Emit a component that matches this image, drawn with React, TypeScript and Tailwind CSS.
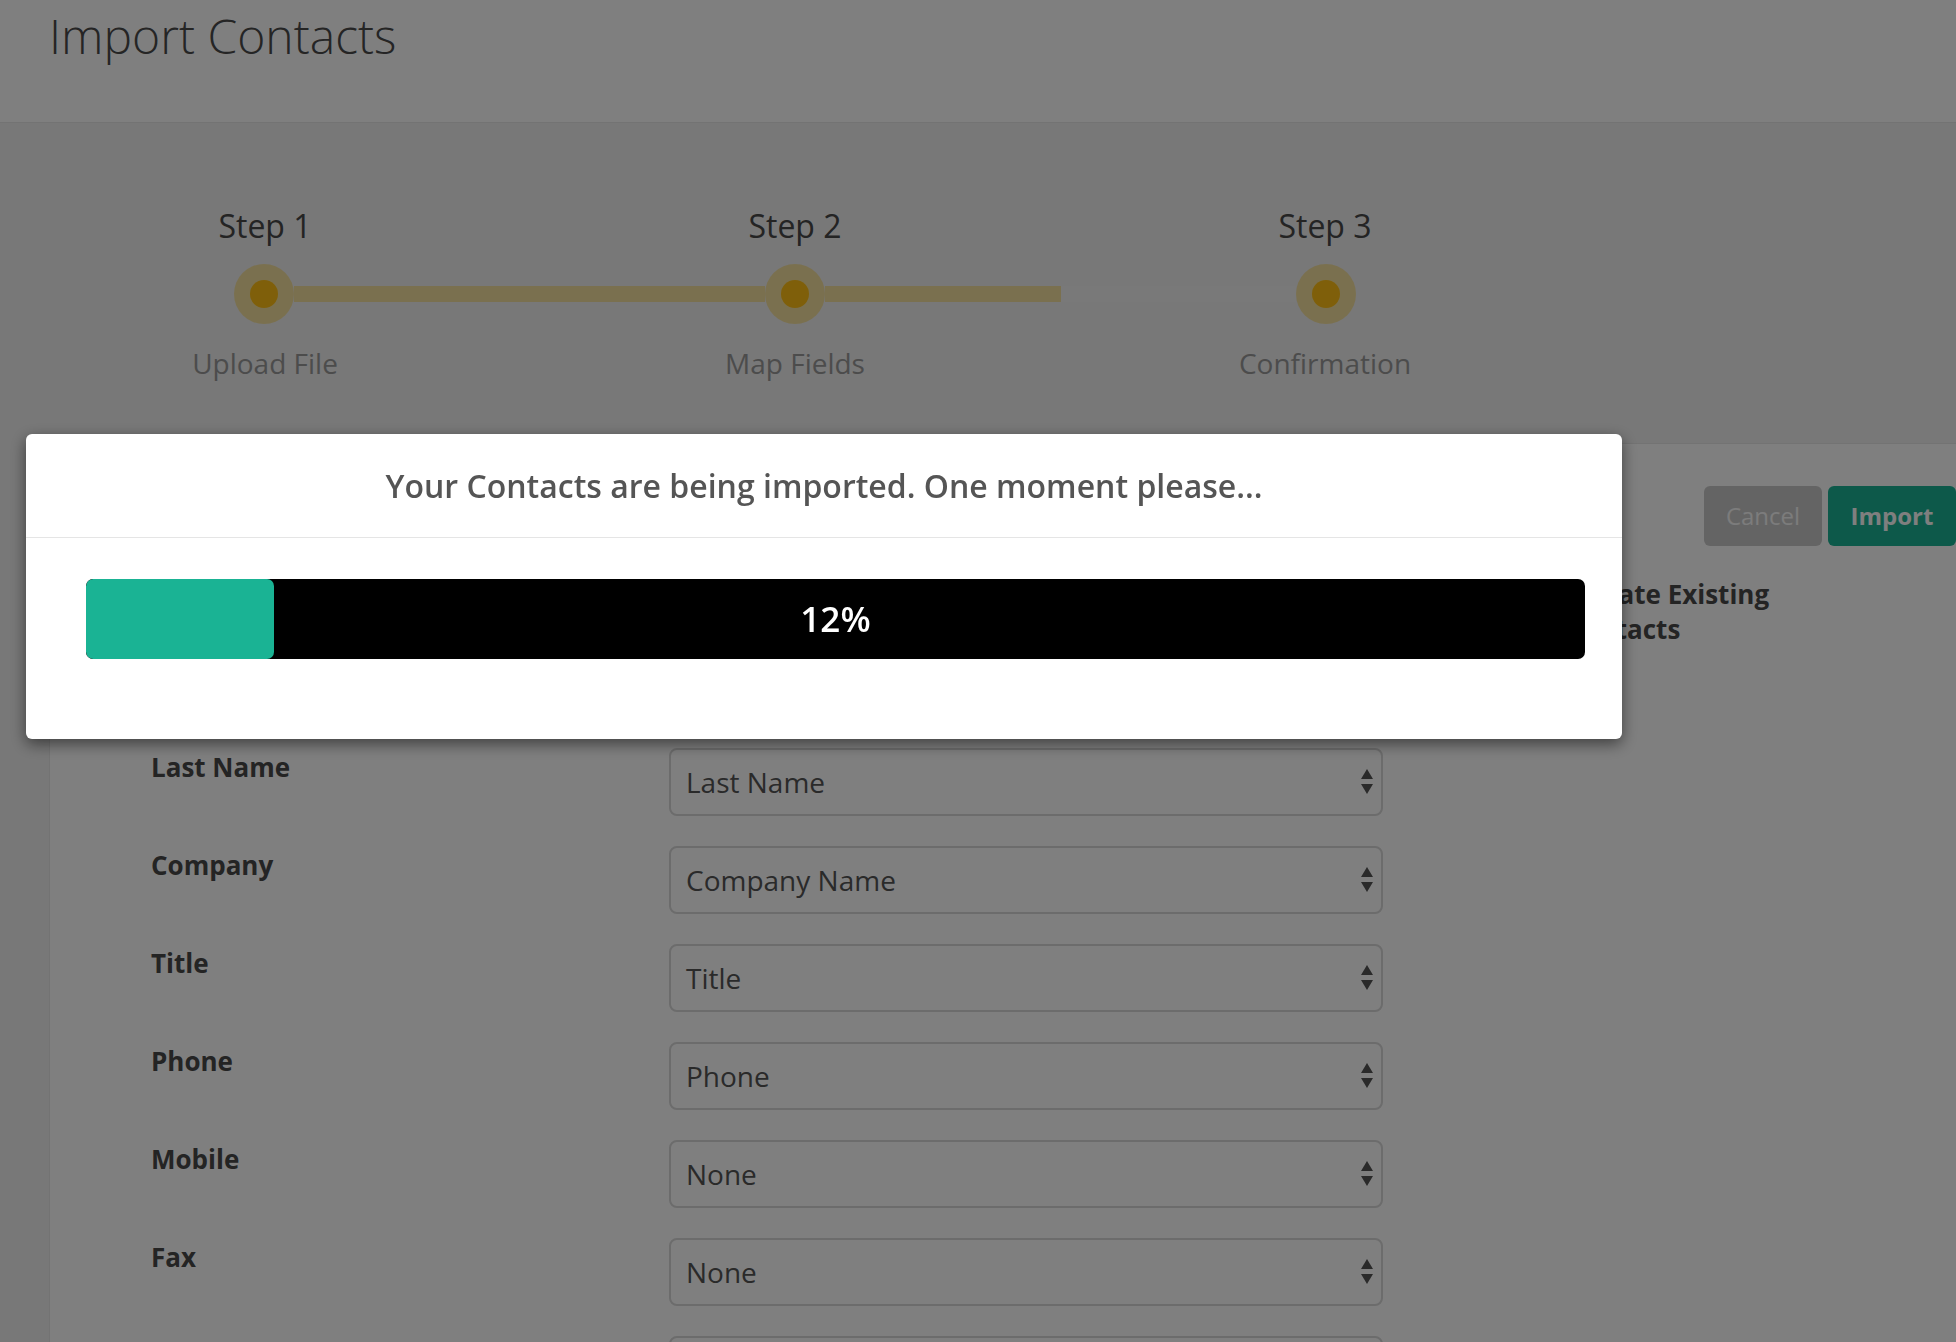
const steps = [
  { title: "Step 1", label: "Upload File" },
  { title: "Step 2", label: "Map Fields" },
  { title: "Step 3", label: "Confirmation" },
];

const fields = [
  { label: "Email", value: "Email" },
  { label: "First Name", value: "First Name" },
  { label: "Last Name", value: "Last Name" },
  { label: "Company", value: "Company Name" },
  { label: "Title", value: "Title" },
  { label: "Phone", value: "Phone" },
  { label: "Mobile", value: "None" },
  { label: "Fax", value: "None" },
  { label: "Address", value: "Address" },
];

function Dot() {
  return (
    <div className="grid h-[60px] w-[60px] shrink-0 place-items-center rounded-full bg-[#f5e19f]">
      <div className="h-[28px] w-[28px] rounded-full bg-[#ffbf14]" />
    </div>
  );
}

function SelectArrows() {
  return (
    <svg width="12" height="26" viewBox="0 0 12 26" className="shrink-0">
      <path d="M6 0 L12 10 L0 10 Z" fill="#555" />
      <path d="M0 15 L12 15 L6 25 Z" fill="#555" />
    </svg>
  );
}

function Stepper() {
  return (
    <div className="w-[1590px] pt-[83px] pb-[61px]">
      <div className="grid grid-cols-3">
        {steps.map((s) => (
          <div key={s.title} className="text-center text-[32px] leading-[40px] text-[#484848]">
            {s.title}
          </div>
        ))}
      </div>
      <div className="mt-[18px] flex items-center px-[234px]">
        <Dot />
        <div className="h-[16px] flex-1 bg-[#f5e19f]" />
        <Dot />
        <div className="flex h-[16px] flex-1">
          <div className="flex-1 bg-[#f5e19f]" />
          <div className="flex-1 bg-[#f3f3f3]" />
        </div>
        <Dot />
      </div>
      <div className="mt-[20px] grid grid-cols-3">
        {steps.map((s) => (
          <div key={s.label} className="text-center text-[28px] leading-[38px] text-[#999]">
            {s.label}
          </div>
        ))}
      </div>
    </div>
  );
}

function FieldRow({ label, value }: { label: string; value: string }) {
  return (
    <div className="flex items-start">
      <div className="w-[518px] pt-px text-[26px] font-bold leading-[36px] text-[#484848]">{label}</div>
      <div className="flex h-[68px] w-[714px] items-center justify-between rounded-[8px] border-2 border-[#d8d8d8] bg-white pl-[15px] pr-[8px] text-[28px] text-[#555]">
        <span>{value}</span>
        <SelectArrows />
      </div>
    </div>
  );
}

function ImportModal({ percent }: { percent: number }) {
  return (
    <div className="fixed inset-0 bg-black/50 pl-[26px] pt-[434px]">
      <div className="w-[1596px] rounded-[6px] bg-white shadow-[0_5px_15px_rgba(0,0,0,0.5)]">
        <div className="flex h-[104px] items-center justify-center border-b border-[#e5e5e5] text-[32px] font-semibold text-[#555]">
          Your Contacts are being imported. One moment please...
        </div>
        <div className="pb-[80px] pl-[60px] pr-[37px] pt-[41px]">
          <div className="relative h-[80px] overflow-hidden rounded-[7px] bg-black">
            <div className="h-full rounded-[7px] bg-[#1ab394]" style={{ width: `calc(${percent}% + 8px)` }} />
            <div className="absolute inset-0 flex items-center justify-center text-[35px] font-semibold text-white">
              {percent}%
            </div>
          </div>
        </div>
      </div>
    </div>
  );
}

export default function App() {
  return (
    <div className="h-screen overflow-hidden bg-[#f0f0f0] font-['Open_Sans',sans-serif]">
      <header className="h-[123px] border-b border-[#e6e6e6] bg-white pl-[49px] pt-[12px]">
        <h1 className="text-[48px] font-light leading-[48px] text-[#4a4a4a]">Import Contacts</h1>
      </header>

      <Stepper />

      <main className="ml-[49px] border-l border-t border-[#e6e6e6] bg-white">
        <div className="flex justify-end gap-[6px] pt-[42px]">
          <button className="h-[60px] w-[118px] rounded-[6px] bg-[#c9c9c9] text-[24px] text-[#f8f8f8]">Cancel</button>
          <button className="h-[60px] w-[128px] rounded-[6px] bg-[#1ab394] text-[24px] font-bold text-white">Import</button>
        </div>

        <div className="mt-[6px] flex items-start pl-[101px]">
          <div className="flex flex-col gap-[30px] pb-[40px]">
            {fields.map((f) => (
              <FieldRow key={f.label} label={f.label} value={f.value} />
            ))}
          </div>
          <label className="ml-[151px] mt-[25px] flex items-start gap-[10px]">
            <input type="checkbox" defaultChecked className="mt-[7px] h-[22px] w-[22px]" />
            <span className="w-[210px] text-[26px] font-bold leading-[35px] text-[#484848]">Update Existing Contacts</span>
          </label>
        </div>
      </main>

      <ImportModal percent={12} />
    </div>
  );
}
